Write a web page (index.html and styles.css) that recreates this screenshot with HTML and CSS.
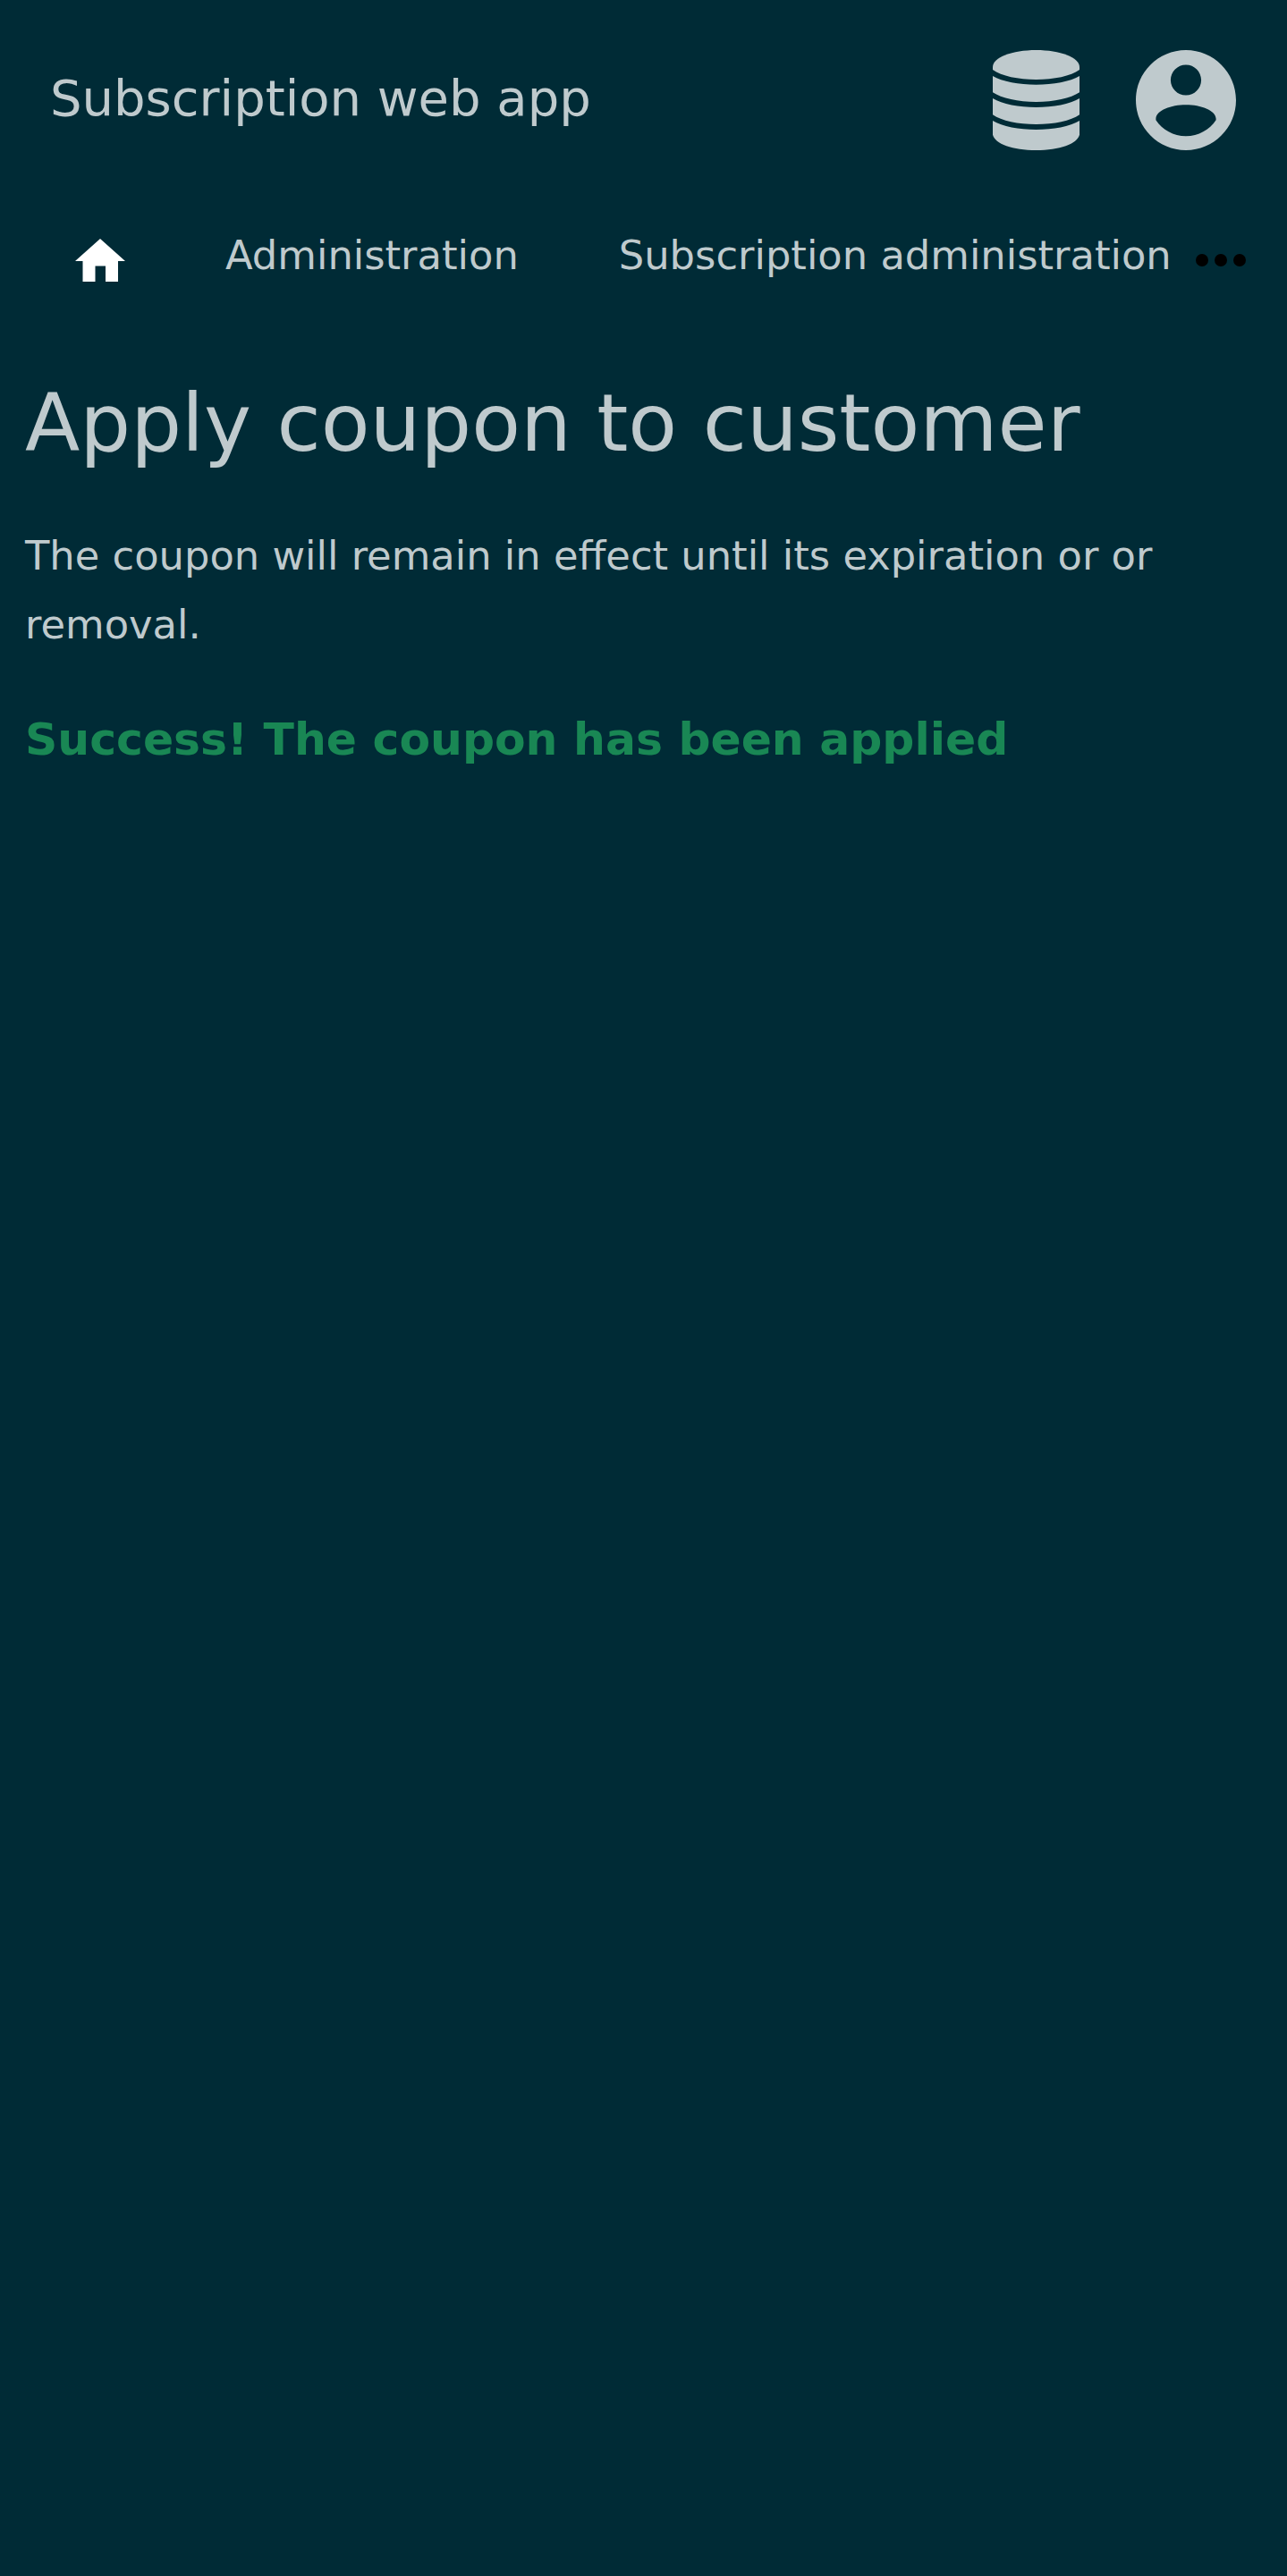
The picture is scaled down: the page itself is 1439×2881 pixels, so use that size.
FILE: index.html
```html
<!DOCTYPE html>
<html lang="en">
<head>
<meta charset="utf-8">
<title>Subscription web app</title>
<link rel="stylesheet" href="styles.css">
</head>
<body>
<header class="topbar">
  <div class="brand">Subscription web app</div>
  <div class="actions">
    <svg class="icon-database" viewBox="0 0 291 336" aria-label="Data">
      <path d="M0 57C0 25 65 0 145.500 0S291 25 291 57V66C262 87 205 99 145.500 99S29 87 0 66z"/>
      <path d="M0 87C32 106 88 116 145.500 116S259 106 291 87V142C262 162 205 174 145.500 174S29 162 0 142z"/>
      <path d="M0 162C32 182 88 192 145.500 192S259 182 291 162V217C262 238 205 249 145.500 249S29 238 0 217z"/>
      <path d="M0 237C32 257 88 267 145.500 267S259 257 291 237V284C284 314 224 336 145.500 336S7 314 0 284z"/>
    </svg>
    <svg class="icon-account" viewBox="2 2 20 20" aria-label="Account">
      <path d="M12 2C6.480 2 2 6.480 2 12s4.480 10 10 10 10-4.480 10-10S17.520 2 12 2zm0 2.930c1.690 0 3.050 1.360 3.050 3.050s-1.360 3.050-3.050 3.050-3.050-1.360-3.050-3.050S10.310 4.930 12 4.930zm0 14.270c-2.500 0-4.710-1.280-6-3.220v-.28c.1-1.700 3-2.770 6-2.770s5.900 1.070 6 2.770v.28c-1.290 1.940-3.500 3.220-6 3.220z"/>
    </svg>
  </div>
</header>
<nav class="menu">
  <a class="home"><svg class="icon-home" viewBox="0 0 56 48" aria-label="Home"><path d="M28 0L56 25H48V48H34V30.500H22.500V48H8.500V25H0z"/></svg></a>
  <a class="entry">Administration</a>
  <a class="entry">Subscription administration</a>
  <svg class="icon-more" viewBox="0 0 56 14" aria-label="More"><circle cx="7" cy="7" r="7"/><circle cx="28" cy="7" r="7"/><circle cx="49" cy="7" r="7"/></svg>
</nav>
<main class="content">
  <h1 class="heading">Apply coupon to customer</h1>
  <p class="note">The coupon will remain in effect until its expiration or or removal.</p>
  <p class="success">Success! The coupon has been applied</p>
</main>
</body>
</html>
```
FILE: styles.css
```css
body {
  margin: 0;
  min-height: 2881px;
  background: #002b36;
  color: #bfcacd;
  font-family: "DejaVu Sans", sans-serif;
  font-size: 44.8px;
  line-height: 76.16px;
}
.topbar {
  display: flex;
  align-items: center;
  justify-content: space-between;
  height: 224px;
  padding: 0 56.6px 0 56px;
}
.brand {
  padding-bottom: 3px;
  font-size: 56px;
  white-space: nowrap;
}
.actions {
  display: flex;
  align-items: center;
  gap: 63.8px;
}
.icon-database {
  width: 97px;
  height: 112px;
  fill: currentColor;
}
.icon-account {
  width: 112px;
  height: 112px;
  fill: currentColor;
}
.menu {
  display: flex;
  align-items: flex-start;
  height: 124px;
  padding: 24px 0 0 84px;
  white-space: nowrap;
}
.home {
  display: flex;
  padding: 19px 112px 0 0;
}
.icon-home {
  width: 56px;
  height: 48px;
  fill: #fff;
}
.entry {
  margin-right: 112px;
}
.entry + .entry {
  margin-right: 27px;
}
.icon-more {
  width: 56px;
  height: 14px;
  margin-top: 35.5px;
  fill: #000;
}
.content {
  padding: 0 28px;
}
.heading {
  margin: 35px 0 44.4px;
  font-size: 89.6px;
  font-weight: 400;
  line-height: 132px;
}
.note {
  margin: 0 0 51.2px;
  line-height: 77px;
}
.success {
  margin: 0;
  font-size: 50.4px;
  font-weight: 700;
  color: #198754;
}
```
